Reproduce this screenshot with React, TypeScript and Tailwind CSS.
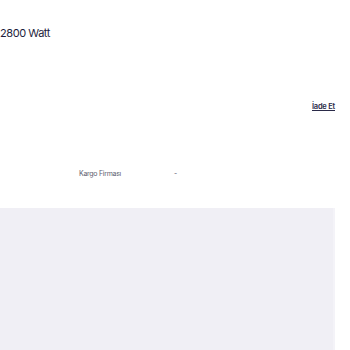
export default function App() {
  return (
    <div className="w-[350px] h-[350px] bg-white overflow-hidden" style={{ fontFamily: "Inter, 'Noto Sans', sans-serif" }}>
      <div className="w-[335px]">
        <div className="pt-[25px] h-[95px]">
          <p className="text-[11px] leading-[16px] tracking-[-0.04em] text-[#1e1e3c]">2800 Watt</p>
        </div>
        <div className="flex justify-end h-[60px] pt-[6px]">
          <span className="text-[7.5px] leading-[12px] font-semibold tracking-[-0.03em] text-[#2a2a48] underline">İade Et</span>
        </div>
        <div className="h-[53px] pt-[12px] pl-[79px] flex">
          <span className="w-[95px] text-[7px] leading-[14px] tracking-[-0.04em] text-[#5c5c70]">Kargo Firması</span>
          <span className="text-[7px] leading-[14px] text-[#5c5c70]">-</span>
        </div>
        <div className="h-[142px] bg-[#f0eff5] border-r-2 border-[#f4f3f8]"></div>
      </div>
    </div>
  );
}
